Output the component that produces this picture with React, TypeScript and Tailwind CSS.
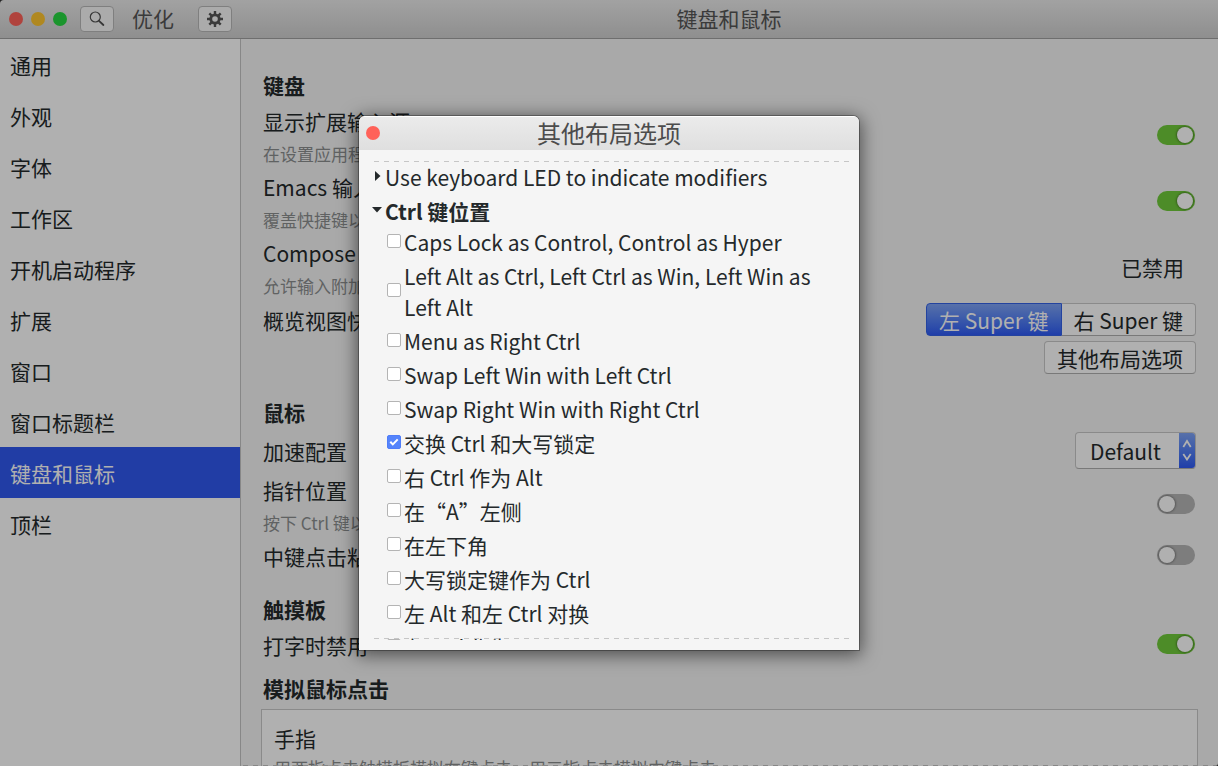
import { useState } from 'react';

const NAV = ['通用', '外观', '字体', '工作区', '开机启动程序', '扩展', '窗口', '窗口标题栏', '键盘和鼠标', '顶栏'];

const CTRL_OPTIONS = [
  'Caps Lock as Control, Control as Hyper',
  'Left Alt as Ctrl, Left Ctrl as Win, Left Win as Left Alt',
  'Menu as Right Ctrl',
  'Swap Left Win with Left Ctrl',
  'Swap Right Win with Right Ctrl',
  '交换 Ctrl 和大写锁定',
  '右 Ctrl 作为 Alt',
  '在“A”左侧',
  '在左下角',
  '大写锁定键作为 Ctrl',
  '左 Alt 和左 Ctrl 对换',
  '左 Ctrl 作为 Meta',
];

const DASHES = 'h-px shrink-0 bg-[repeating-linear-gradient(90deg,#c6c6c6_0_5px,transparent_5px_10px)]';

function Switch({ id, on = false }: { id: string; on?: boolean }) {
  return (
    <input
      id={id}
      type="checkbox"
      role="switch"
      defaultChecked={on}
      className="mr-px flex h-5 w-[38px] shrink-0 appearance-none items-center rounded-full bg-[#b5b5b5] px-0.5 before:size-4 before:rounded-full before:bg-white before:shadow-[0_0_2px_1px_rgba(0,0,0,0.3)] checked:justify-end checked:bg-[#70cb3a]"
    />
  );
}

function SwitchRow({ id, title, note, on }: { id: string; title: string; note?: string; on?: boolean }) {
  return (
    <div className={note ? 'flex h-[66px] items-center justify-between' : 'flex h-9 items-center justify-between'}>
      <label htmlFor={id} className={note ? 'flex flex-col gap-0.5 pt-1' : 'pt-0.5'}>
        <span>{title}</span>
        {note && <span className="text-[17px] leading-[29px] text-[#8b8e8f]">{note}</span>}
      </label>
      <Switch id={id} on={on} />
    </div>
  );
}

function Header() {
  return (
    <header className="flex h-[39px] shrink-0 items-center rounded-tl-[4px] border-b border-[#a0a0a0] bg-linear-to-b from-[#ebebeb] to-[#cfcfcf] text-[#555]">
      <div className="flex w-60 shrink-0 items-center pl-[9px]">
        <div className="flex gap-2">
          <button aria-label="关闭" className="size-3.5 rounded-full bg-[#ff6259]" />
          <button aria-label="最小化" className="size-3.5 rounded-full bg-[#ffc62f]" />
          <button aria-label="最大化" className="size-3.5 rounded-full bg-[#28d842]" />
        </div>
        <button aria-label="搜索" className="ml-[13px] flex h-[26px] w-[34px] items-center justify-center rounded-[4px] border border-[#b8b8b8] bg-[#f8f8f8]">
          <svg viewBox="0 0 16 16" className="size-4" fill="none" stroke="#505050" aria-hidden="true">
            <circle cx="6.3" cy="6" r="5" strokeWidth="1.2" />
            <path d="M10 9.8l4.4 4.200" strokeWidth="1.800" strokeLinecap="round" />
          </svg>
        </button>
        <h1 className="flex-1 pb-0.5 pr-1.5 text-center">优化</h1>
        <button aria-label="设置" className="mr-2 flex h-[26px] w-[34px] items-center justify-center rounded-[4px] border border-[#b8b8b8] bg-[#f8f8f8]">
          <svg viewBox="0 0 16 16" className="size-4" aria-hidden="true">
            <g stroke="#565656" strokeWidth="2.4">
              <path d="M8 0v16M0 8h16M2.3 2.3l11.4 11.4M13.7 2.3L2.3 13.7" />
            </g>
            <circle cx="8" cy="8" r="5.6" fill="#565656" />
            <circle cx="8" cy="8" r="2.8" fill="#f8f8f8" />
          </svg>
        </button>
      </div>
      <h2 className="flex-1 pb-0.5 text-center">键盘和鼠标</h2>
    </header>
  );
}

function Settings() {
  return (
    <main className="relative flex min-w-0 flex-1 flex-col overflow-hidden rounded-br-[3px] border-l border-[#c4c4c4] bg-[#f5f5f5] pt-[31px]">
      <div className="flex shrink-0 flex-col px-[22px]">
        <h3 className="h-8 font-bold leading-[30px]">键盘</h3>
        <SwitchRow id="sources" title="显示扩展输入源" note="在设置应用程序中显示更多输入源选项。" on />
        <SwitchRow id="emacs" title="Emacs 输入" note="覆盖快捷键以使用 Emacs 编辑器中的按键绑定。" on />
        <div className="flex h-[66px] items-center justify-between">
          <div className="flex flex-col gap-0.5 pt-1">
            <span>Compose 键</span>
            <span className="text-[17px] leading-[29px] text-[#8b8e8f]">允许输入附加字符。</span>
          </div>
          <button className="px-3">已禁用</button>
        </div>
        <div className="flex h-10 items-start justify-between pt-[3px]">
          <span className="pt-0.5">概览视图快捷键</span>
          <div className="flex h-[33px]">
            <button className="rounded-l-[4px] border border-[#3462e6] bg-linear-to-b from-[#7fa3f5] to-[#2f5af5] px-3 pt-0.5 leading-[29px] text-white">左 Super 键</button>
            <button className="rounded-r-[4px] border border-l-0 border-[#c8c8c8] border-b-[#b0b0b0] bg-white px-3 pt-0.5 leading-[29px]">右 Super 键</button>
          </div>
        </div>
        <button className="mt-px h-[33px] self-end rounded-[4px] border border-[#c8c8c8] border-b-[#b0b0b0] bg-white px-3 pt-0.5 leading-[29px]">
          其他布局选项
        </button>

        <h3 className="mt-[23px] h-8 font-bold leading-[30px]">鼠标</h3>
        <div className="flex h-[42px] items-center justify-between">
          <label htmlFor="profile" className="pt-0.5">加速配置</label>
          <div className="relative flex h-[37px] overflow-hidden rounded-[4px] border border-[#c8c8c8] border-b-[#b0b0b0] bg-white">
            <select id="profile" className="w-[119px] appearance-none pl-3.5 leading-9">
              <option>Default</option>
              <option>Adaptive</option>
              <option>Flat</option>
            </select>
            <span className="pointer-events-none absolute inset-y-0 right-0 flex w-4 items-center justify-center bg-linear-to-b from-[#7fa3f5] to-[#2f5af5]">
              <svg viewBox="0 0 10 22" className="h-[22px] w-2.5" fill="none" stroke="#fff" strokeWidth="1.8" aria-hidden="true">
                <path d="M1.3 8L5 2l3.700 6M1.300 15L5 20.500 8.700 15" />
              </svg>
            </span>
          </div>
        </div>
        <SwitchRow id="pointer" title="指针位置" note="按下 Ctrl 键以高亮显示指针位置。" />
        <SwitchRow id="paste" title="中键点击粘贴" />

        <h3 className="mt-[21px] h-8 font-bold leading-[30px]">触摸板</h3>
        <SwitchRow id="typing" title="打字时禁用" on />
        <h3 className="mt-[11px] h-8 font-bold leading-[30px]">模拟鼠标点击</h3>
      </div>
      <section className="mx-5 mt-1 shrink-0 border border-[#c8c8c8] bg-white px-3 py-3">
        <p className="leading-8">手指</p>
        <p className="text-[17px] leading-[27px] text-[#8b8e8f]">用两指点击触摸板模拟右键点击，用三指点击模拟中键点击。</p>
      </section>
      <div className="absolute inset-x-0.5 bottom-0 flex flex-col">
        <div className={DASHES} />
      </div>
    </main>
  );
}

function LayoutOptions() {
  const [checked, setChecked] = useState([5]);
  const toggle = (i: number) => setChecked((c) => (c.includes(i) ? c.filter((n) => n !== i) : [...c, i]));
  return (
    <div role="dialog" aria-labelledby="dialog-title" className="flex w-[500px] flex-col overflow-hidden rounded-t-[6px] bg-[#f5f5f5] text-[#24292b] shadow-[0_0_0_1px_rgba(0,0,0,0.3),0_3px_18px_2px_rgba(0,0,0,0.55)]">
      <div className="grid h-[34px] shrink-0 grid-cols-[20px_1fr_20px] items-center border-t border-white bg-linear-to-b from-[#ebebeb] to-[#dfdfdf] px-[7px] pb-0.5">
        <button aria-label="关闭" className="size-3.5 rounded-full bg-[#ff6259]" />
        <h2 id="dialog-title" className="text-center text-2xl leading-[30px] text-[#4c4c4c]">其他布局选项</h2>
      </div>
      <div className="relative flex flex-col px-2.5 pb-2.5 pt-[11px]">
        <div className={`${DASHES} ml-[5px]`} />
        <div className="h-[478px] overflow-hidden">
          <button className="flex h-[33px] w-full items-center gap-1 pb-0.5 pl-1.5 text-left">
            <svg viewBox="0 0 6 10" className="-mt-1 h-2.5 w-1.5" aria-hidden="true"><path d="M0 0l5.500 5L0 10z" fill="#24292b" /></svg>
            Use keyboard LED to indicate modifiers
          </button>
          <button className="flex h-8 w-full items-center gap-[3px] pl-[3px] text-left font-bold">
            <svg viewBox="0 0 10 6" className="-mt-0.5 h-1.5 w-2.5" aria-hidden="true"><path d="M0 0h10L5 5.500z" fill="#24292b" /></svg>
            Ctrl 键位置
          </button>
          {CTRL_OPTIONS.map((text, i) => (
            <label key={text} className="flex items-center gap-[3px] pb-[3px] pl-[18px]">
              <input
                type="checkbox"
                checked={checked.includes(i)}
                onChange={() => toggle(i)}
                className="peer absolute size-3.5 appearance-none opacity-0"
              />
              <span className="mb-1 flex size-3.5 shrink-0 items-center justify-center rounded-[2px] border border-[#b4b4b4] bg-white peer-checked:border-[#4f7df9] peer-checked:bg-[#5584fb]">
                {checked.includes(i) && (
                  <svg viewBox="0 0 10 10" className="size-2.5" fill="none" stroke="#fff" strokeWidth="2" aria-hidden="true">
                    <path d="M1.300 4.800l2.500 2.600 4.900-5" />
                  </svg>
                )}
              </span>
              <span className="w-[430px]">{text}</span>
            </label>
          ))}
        </div>
        <div className="absolute bottom-[11px] left-[15px] right-2.5 flex flex-col">
          <div className={DASHES} />
        </div>
      </div>
    </div>
  );
}

export default function App() {
  return (
    <div className="relative flex h-screen flex-col overflow-hidden bg-[#333] font-['Noto_Sans_CJK_SC','Noto_Sans',sans-serif] text-[21px] leading-[31px] text-[#24292b]">
      <Header />
      <div className="flex min-h-0 flex-1">
        <nav className="w-60 shrink-0 bg-white">
          {NAV.map((item) => (
            <a
              key={item}
              href="#"
              className={item === '键盘和鼠标' ? 'block bg-[#3059f0] px-2.5 pt-0.5 leading-[49px] text-white' : 'block px-2.5 pt-0.5 leading-[49px]'}
            >
              {item}
            </a>
          ))}
        </nav>
        <Settings />
      </div>
      <div className="absolute inset-0 flex items-center justify-center bg-black/31">
        <LayoutOptions />
      </div>
    </div>
  );
}
